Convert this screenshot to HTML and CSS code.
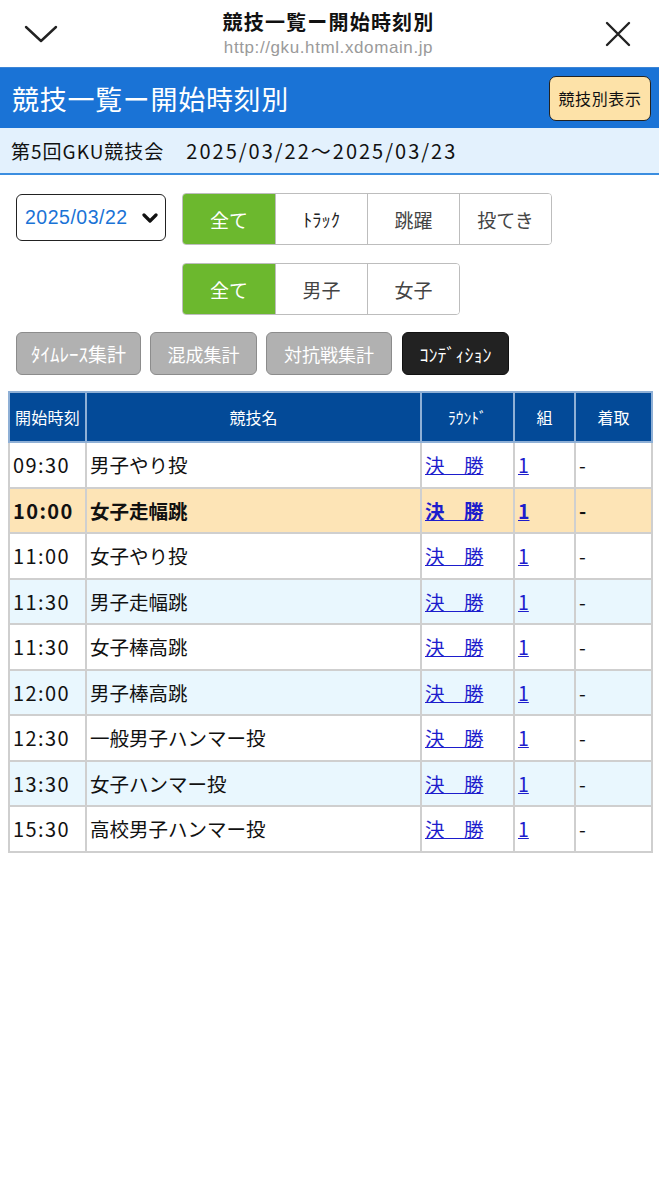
FILE: index.html
```html
<!DOCTYPE html>
<html lang="ja">
<head>
<meta charset="utf-8">
<title>競技一覧ー開始時刻別</title>
<link rel="stylesheet" href="styles.css">
</head>
<body>
<div class="topbar">
  <svg class="tb-icon" width="34" height="20" viewBox="0 0 34 20"><path d="M2 3 L17 17 L32 3" fill="none" stroke="#222" stroke-width="2.4" stroke-linecap="round" stroke-linejoin="round"/></svg>
  <div class="tb-center">
    <div class="tb-title">競技一覧ー開始時刻別</div>
    <div class="tb-url">http://gku.html.xdomain.jp</div>
  </div>
  <svg class="tb-icon" width="26" height="26" viewBox="0 0 26 26"><path d="M2 2 L24 24 M24 2 L2 24" fill="none" stroke="#222" stroke-width="2.4" stroke-linecap="round"/></svg>
</div>

<header class="page-head">
  <h1 class="page-title">競技一覧ー開始時刻別</h1>
  <button class="switch-btn">競技別表示</button>
</header>
<div class="meet-bar"><span class="meet-name">第5回GKU競技会</span><span class="meet-date">2025/03/22〜2025/03/23</span></div>

<div class="controls">
  <div class="date-select">
    <span class="date-text">2025/03/22</span>
    <svg width="16" height="12" viewBox="0 0 16 12"><path d="M2 3 L8 9 L14 3" fill="none" stroke="#111" stroke-width="3.2" stroke-linecap="round" stroke-linejoin="round"/></svg>
  </div>
  <div class="seg">
    <span class="seg-item on">全て</span>
    <span class="seg-item hw">ﾄﾗｯｸ</span>
    <span class="seg-item">跳躍</span>
    <span class="seg-item">投てき</span>
  </div>
  <div class="seg seg-2">
    <span class="seg-item on">全て</span>
    <span class="seg-item">男子</span>
    <span class="seg-item">女子</span>
  </div>
</div>

<div class="tools">
  <span class="tool t1 hw">ﾀｲﾑﾚｰｽ集計</span>
  <span class="tool t2">混成集計</span>
  <span class="tool t3">対抗戦集計</span>
  <span class="tool t4 dark hw">ｺﾝﾃﾞｨｼｮﾝ</span>
</div>

<table class="events">
  <colgroup>
    <col class="c-time"><col class="c-name"><col class="c-round"><col class="c-group"><col class="c-rank">
  </colgroup>
  <thead>
    <tr><th class="th-time">開始時刻</th><th>競技名</th><th class="hw-th">ﾗｳﾝﾄﾞ</th><th>組</th><th>着取</th></tr>
  </thead>
  <tbody>
    <tr><td class="t">09:30</td><td>男子やり投</td><td><a href="#">決　勝</a></td><td><a href="#">1</a></td><td>-</td></tr>
    <tr class="now"><td class="t">10:00</td><td>女子走幅跳</td><td><a href="#">決　勝</a></td><td><a href="#">1</a></td><td>-</td></tr>
    <tr><td class="t">11:00</td><td>女子やり投</td><td><a href="#">決　勝</a></td><td><a href="#">1</a></td><td>-</td></tr>
    <tr class="alt"><td class="t">11:30</td><td>男子走幅跳</td><td><a href="#">決　勝</a></td><td><a href="#">1</a></td><td>-</td></tr>
    <tr><td class="t">11:30</td><td>女子棒高跳</td><td><a href="#">決　勝</a></td><td><a href="#">1</a></td><td>-</td></tr>
    <tr class="alt"><td class="t">12:00</td><td>男子棒高跳</td><td><a href="#">決　勝</a></td><td><a href="#">1</a></td><td>-</td></tr>
    <tr><td class="t">12:30</td><td>一般男子ハンマー投</td><td><a href="#">決　勝</a></td><td><a href="#">1</a></td><td>-</td></tr>
    <tr class="alt"><td class="t">13:30</td><td>女子ハンマー投</td><td><a href="#">決　勝</a></td><td><a href="#">1</a></td><td>-</td></tr>
    <tr><td class="t">15:30</td><td>高校男子ハンマー投</td><td><a href="#">決　勝</a></td><td><a href="#">1</a></td><td>-</td></tr>
  </tbody>
</table>
</body>
</html>
```

FILE: styles.css
```css
* { box-sizing: border-box; }
body {
  margin: 0;
  background: #fff;
  color: #111;
  font-family: "Noto Sans CJK JP", "Noto Sans", sans-serif;
}
.topbar {
  height: 67px;
  display: flex;
  align-items: center;
  justify-content: space-between;
  padding: 0 28px 0 24px;
}
.tb-icon { display: block; }
.tb-center { text-align: center; line-height: 1; padding-right: 6px; }
.tb-title { font-size: 20px; font-weight: 700; color: #111; letter-spacing: 1.2px; margin-bottom: 7px; }
.tb-url { font-family: "Liberation Sans", "Noto Sans", sans-serif; font-size: 17px; letter-spacing: 0.6px; color: #9a9a9a; }

.page-head {
  height: 61px;
  background: #1a73d6;
  border-top: 1px solid #3c85d6;
  display: flex;
  align-items: center;
  justify-content: space-between;
  padding: 0 8px 0 12px;
}
.page-title {
  margin: 0;
  font-size: 27px;
  letter-spacing: 0.7px;
  font-weight: 400;
  color: #fff;
  line-height: 1;
}
.switch-btn {
  width: 102px;
  height: 45px;
  background: #fde2a8;
  border: 1.5px solid #222;
  border-radius: 7px;
  font-family: inherit;
  font-size: 16px;
  letter-spacing: 0.6px;
  color: #111;
  padding: 0;
}
.meet-bar {
  height: 47px;
  background: #e3f1fd;
  border-bottom: 2px solid #3b8ee0;
  display: flex;
  align-items: center;
  gap: 22px;
  padding-left: 11px;
  font-size: 19px;
  color: #111;
}
.meet-name { letter-spacing: 1px; }
.meet-date { font-size: 20px; letter-spacing: 2px; }

.controls {
  display: grid;
  grid-template-columns: 150px auto;
  column-gap: 16px;
  row-gap: 18px;
  padding: 18px 16px 0 16px;
  justify-content: start;
}
.date-select {
  height: 47px;
  margin-top: 1px;
  border: 1.5px solid #222;
  border-radius: 6px;
  display: flex;
  align-items: center;
  justify-content: space-between;
  padding: 0 7px 0 8px;
}
.date-text { font-family: "Liberation Sans", sans-serif; font-size: 19.5px; letter-spacing: 0.5px; color: #1a73d6; }
.seg {
  display: flex;
  height: 52px;
  border: 1.5px solid #bdbdbd;
  border-radius: 4px;
  overflow: hidden;
  width: max-content;
}
.seg-2 { grid-column: 2; }
.seg-item {
  width: 92px;
  display: flex;
  align-items: center;
  justify-content: center;
  font-size: 19px;
  color: #444;
  background: #fff;
  border-left: 1.5px solid #bdbdbd;
}
.seg-item:first-child { border-left: none; }
.seg-item.on { background: #6cb82e; color: #fff; }
.seg-item.hw { font-size: 18.5px; color: #222; }

.tools {
  display: flex;
  gap: 9px;
  padding: 17px 16px 0 16px;
}
.tool {
  height: 43px;
  background: #b1b1b1;
  border: 1.5px solid #8c8c8c;
  border-radius: 6px;
  color: #fff;
  font-size: 18px;
  display: flex;
  align-items: center;
  justify-content: center;
}
.tool.hw { font-size: 19px; }
.t1 { width: 125px; }
.t2 { width: 107px; }
.t3 { width: 126px; }
.t4 { width: 107px; margin-left: 1px; }
.tool.dark { background: #222; border-color: #111; color: #fff; font-size: 18px; }

.events {
  margin: 16px 8px 0 8px;
  width: 643px;
  border-collapse: collapse;
  table-layout: fixed;
  border: 2px solid #cfcfcf;
}
.c-time { width: 77px; }
.c-name { width: 335px; }
.c-round { width: 93px; }
.c-group { width: 61px; }
.c-rank { width: 77px; }
.events th {
  height: 50px;
  background: #034a98;
  color: #fff;
  font-weight: 400;
  font-size: 16px;
  border: 2px solid #8fb0d6;
  text-align: center;
  padding: 0;
}
.events th.th-time { letter-spacing: 0.3px; }
.events th.hw-th { font-size: 15.5px; }
.events td {
  height: 45.5px;
  border: 2px solid #cfcfcf;
  font-size: 19.5px;
  padding: 0 3px;
  white-space: nowrap;
}
.events td.t { font-size: 20px; letter-spacing: 1.4px; }
.events tr.alt td { background: #e9f7fe; }
.events tr.now td { background: #fde4b6; font-weight: 700; }
.events a { color: #1d1dcc; text-decoration: underline; }
```
